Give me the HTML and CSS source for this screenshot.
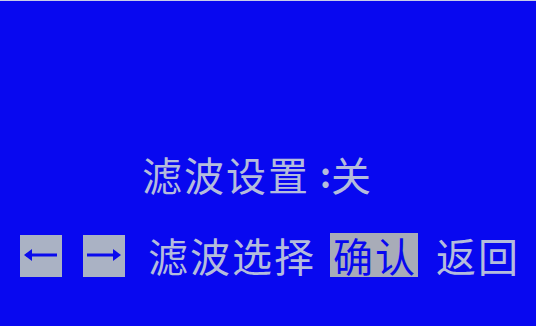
FILE: index.html
```html
<!DOCTYPE html>
<html lang="zh">
<head>
<meta charset="utf-8">
<link rel="stylesheet" href="styles.css">
</head>
<body>
<div class="screen">
  <div class="row status"><span class="label">滤波设置</span><span class="colon">:</span><span>关</span></div>
  <div class="row menu">
    <div class="key">
      <svg width="42" height="42" viewBox="0 0 42 42"><path d="M6 20h31" stroke="#0a0aee" stroke-width="3"/><path d="M4 20l8-6v12z" fill="#0a0aee"/></svg>
    </div>
    <div class="key">
      <svg width="42" height="42" viewBox="0 0 42 42"><path d="M4 20h30" stroke="#0a0aee" stroke-width="3"/><path d="M38 20l-8-6v12z" fill="#0a0aee"/></svg>
    </div>
    <span class="item">滤波选择</span>
    <span class="item selected">确认</span>
    <span class="item">返回</span>
  </div>
</div>
</body>
</html>
```
FILE: styles.css
```css
html, body {
  margin: 0;
  padding: 0;
  background: #0808f0;
}
body {
  width: 536px;
  height: 326px;
  overflow: hidden;
  border-top: 1px solid #c8cce8;
  box-sizing: border-box;
  font-family: "Noto Sans CJK SC", "Noto Sans", sans-serif;
  color: #b4bcdc;
}
.screen {
  display: flex;
  flex-direction: column;
  padding: 151px 0 0 20px;
  gap: 37px;
}
.row {
  display: flex;
  align-items: center;
  font-size: 40px;
  line-height: 44px;
  letter-spacing: 2px;
  white-space: nowrap;
}
.row > * {
  flex-shrink: 0;
}
.status {
  padding-left: 122px;
}
.colon {
  font-size: 34px;
  margin: 0 0 0 10px;
  letter-spacing: 0;
  font-weight: 700;
}
.menu {
  height: 44px;
  align-items: flex-end;
}
.key {
  width: 42px;
  height: 42px;
  background: #aab2c4;
  margin-right: 21px;
  display: flex;
}
.item {
  margin-left: 2px;
  margin-right: 12px;
}
.selected {
  background: #a8acb8;
  color: #0808f0;
  padding: 0 1px 0 3px;
  margin-left: 2px;
  margin-right: 16px;
}
```
